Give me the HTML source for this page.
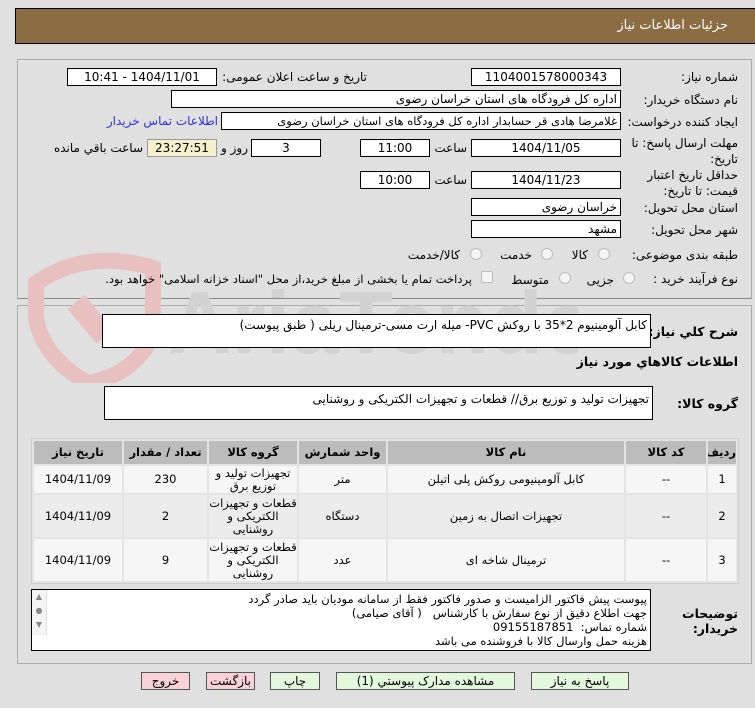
<!DOCTYPE html>
<html><head><meta charset="utf-8"><style>
*{box-sizing:border-box;margin:0;padding:0}
body{width:755px;height:708px;background:#e0e0e0;font-family:"DejaVu Sans","Liberation Sans",sans-serif;font-size:11px;color:#000;position:relative;overflow:hidden}
.a{position:absolute;white-space:nowrap}
.r{direction:rtl;text-align:right}
.box{position:absolute;background:#fff;border:1px solid #000;height:18px;line-height:16px;padding:0 3px;direction:rtl;white-space:nowrap;overflow:hidden;font-size:12px}
.c{text-align:center}
.lbl{position:absolute;direction:rtl;text-align:right;white-space:nowrap;font-size:12px}
.rad{position:absolute;width:12px;height:12px;border-radius:50%;border:1px solid #bbb;background:#f4f4f4}
.btn{position:absolute;top:672px;height:18px;border:1px solid #555;text-align:center;line-height:16px;font-size:12px}
.g{background:#e4f8de}.p{background:#f8d2d4}
table{position:absolute;left:31px;top:438px;width:708px;border-collapse:separate;border-spacing:2px;background:#e4e4e4;border:1px solid #ccc;direction:rtl;table-layout:fixed}
td,th{text-align:center;font-size:11.5px;line-height:13px;padding:0;overflow:hidden}
th{background:#bcbcbc;height:23px;font-weight:bold}
tr.o td{background:#f6f6f6}tr.e td{background:#ececec}
</style></head><body>
<div class="a" style="left:15px;top:8px;width:740px;height:36px;background:#8b6c43;border:1px solid #000;border-right:none"></div>
<div class="a r" style="right:27px;top:18px;color:#fff;font-size:13px">جزئیات اطلاعات نیاز</div>

<div class="a" style="left:17px;top:59px;width:735px;height:240px;border:1px solid #aaa;border-bottom-color:#888"></div>
<div class="a" style="left:17px;top:305px;width:735px;height:359px;border:1px solid #aaa"></div>

<svg class="a" style="left:18px;top:248px" width="560" height="135">
<path d="M18 35 Q70 0 135 20 L135 85 Q120 125 70 135 Q25 110 18 70 Z" fill="none" stroke="#e8c0c0" stroke-width="16"/>
<rect x="60" y="50" width="22" height="45" fill="#e8c0c0" transform="rotate(-40 70 70)"/>
<text x="150" y="105" font-family="Liberation Sans" font-weight="bold" font-size="88" fill="#d2d2d2">AriaTender.net</text>
</svg>

<div class="lbl" style="right:17px;top:70px">شماره نیاز:</div>
<div class="box c" style="left:471px;top:68px;width:150px">1104001578000343</div>
<div class="lbl" style="right:388px;top:70px">تاریخ و ساعت اعلان عمومی:</div>
<div class="box c" style="left:67px;top:68px;width:150px">1404/11/01 - 10:41</div>

<div class="lbl" style="right:17px;top:93px">نام دستگاه خریدار:</div>
<div class="box" style="left:171px;top:90px;width:450px">اداره کل فرودگاه های استان خراسان رضوی</div>

<div class="lbl" style="right:17px;top:115px">ایجاد کننده درخواست:</div>
<div class="box" style="left:221px;top:112px;width:400px;font-size:11.5px">غلامرضا هادی قر حسابدار اداره کل فرودگاه های استان خراسان رضوی</div>
<div class="lbl" style="right:537px;top:114px;color:#3030d0">اطلاعات تماس خریدار</div>

<div class="lbl" style="right:17px;top:135px;line-height:16px">مهلت ارسال پاسخ: تا<br>تاریخ:</div>
<div class="box c" style="left:471px;top:139px;width:150px">1404/11/05</div>
<div class="lbl" style="right:288px;top:141px">ساعت</div>
<div class="box c" style="left:360px;top:139px;width:70px">11:00</div>
<div class="box c" style="left:251px;top:139px;width:70px">3</div>
<div class="lbl" style="right:507px;top:141px">روز و</div>
<div class="box c" style="left:147px;top:139px;width:70px;background:#f5f0cc;border-color:#999">23:27:51</div>
<div class="lbl" style="right:612px;top:141px">ساعت باقي مانده</div>

<div class="lbl" style="right:17px;top:167px;line-height:16px">حداقل تاریخ اعتبار<br>قیمت: تا تاریخ:</div>
<div class="box c" style="left:471px;top:171px;width:150px">1404/11/23</div>
<div class="lbl" style="right:288px;top:173px">ساعت</div>
<div class="box c" style="left:360px;top:171px;width:70px">10:00</div>

<div class="lbl" style="right:17px;top:201px">استان محل تحویل:</div>
<div class="box" style="left:471px;top:198px;width:150px">خراسان رضوی</div>
<div class="lbl" style="right:17px;top:223px">شهر محل تحویل:</div>
<div class="box" style="left:471px;top:220px;width:150px">مشهد</div>

<div class="lbl" style="right:17px;top:248px">طبقه بندی موضوعی:</div>
<div class="rad" style="left:598px;top:248px"></div><div class="lbl" style="right:167px;top:248px">کالا</div>
<div class="rad" style="left:541px;top:248px"></div><div class="lbl" style="right:223px;top:248px">خدمت</div>
<div class="rad" style="left:470px;top:248px"></div><div class="lbl" style="right:295px;top:248px">کالا/خدمت</div>

<div class="lbl" style="right:17px;top:272px">نوع فرآیند خرید :</div>
<div class="rad" style="left:623px;top:272px"></div><div class="lbl" style="right:141px;top:273px">جزیی</div>
<div class="rad" style="left:559px;top:272px"></div><div class="lbl" style="right:206px;top:273px">متوسط</div>
<div class="a" style="left:481px;top:271px;width:12px;height:12px;border:1px solid #bbb;background:#f4f4f4;border-radius:2px"></div>
<div class="lbl" style="right:283px;top:272px;font-size:11.5px">پرداخت تمام یا بخشی از مبلغ خرید،از محل "اسناد خزانه اسلامی" خواهد بود.</div>

<div class="lbl" style="right:17px;top:324px;font-weight:bold;font-size:12.5px">شرح کلي نیاز:</div>
<div class="box" style="left:102px;top:314px;width:549px;height:34px;padding-top:2px">کابل آلومینیوم 2*35 با روکش PVC- میله ارت مسی-ترمینال ریلی ( طبق پیوست)</div>
<div class="lbl" style="right:17px;top:354px;font-weight:bold;font-size:12.5px">اطلاعات کالاهاي مورد نیاز</div>
<div class="lbl" style="right:17px;top:396px;font-weight:bold;font-size:12.5px">گروه کالا:</div>
<div class="box" style="left:104px;top:386px;width:549px;height:34px;padding-top:4px">تجهیزات تولید و توزیع برق// قطعات و تجهیزات الکتریکی و روشنایی</div>

<table>
<colgroup><col style="width:28px"><col style="width:80px"><col style="width:236px"><col style="width:87px"><col style="width:88px"><col style="width:83px"><col></colgroup>
<tr><th>ردیف</th><th>کد کالا</th><th>نام کالا</th><th>واحد شمارش</th><th>گروه کالا</th><th>تعداد / مقدار</th><th>تاریخ نیاز</th></tr>
<tr class="o" style="height:27px"><td>1</td><td>--</td><td>کابل آلومینیومی روکش پلی اتیلن</td><td>متر</td><td>تجهیزات تولید و<br>توزیع برق</td><td>230</td><td>1404/11/09</td></tr>
<tr class="e" style="height:42px"><td>2</td><td>--</td><td>تجهیزات اتصال به زمین</td><td>دستگاه</td><td>قطعات و تجهیزات<br>الکتریکی و<br>روشنایی</td><td>2</td><td>1404/11/09</td></tr>
<tr class="o" style="height:42px"><td>3</td><td>--</td><td>ترمینال شاخه ای</td><td>عدد</td><td>قطعات و تجهیزات<br>الکتریکی و<br>روشنایی</td><td>9</td><td>1404/11/09</td></tr>
</table>

<div class="lbl" style="right:17px;top:606px;font-weight:bold;line-height:15px;font-size:12.5px">توضیحات<br>خریدار:</div>
<div class="box" style="left:31px;top:589px;width:620px;height:62px;line-height:14px;padding-top:2px;white-space:normal;font-size:11.5px">پیوست پیش فاکتور الزامیست و صدور فاکتور فقط از سامانه مودیان باید صادر گردد<br>جهت اطلاع دقیق از نوع سفارش با کارشناس &nbsp; ( آقای صیامی)<br>شماره تماس: &nbsp;09155187851<br>هزینه حمل وارسال کالا با فروشنده می باشد</div>
<div class="a" style="left:32px;top:590px;width:15px;height:45px;background:#f4f4f4;border-right:1px solid #ddd;font-size:8px;color:#888;text-align:center;line-height:14px">▲<br>●<br>▼</div>

<div class="btn g" style="left:531px;width:98px">پاسخ به نیاز</div>
<div class="btn g" style="left:336px;width:179px">مشاهده مدارک پیوستي (1)</div>
<div class="btn g" style="left:270px;width:50px">چاپ</div>
<div class="btn p" style="left:206px;width:49px">بازگشت</div>
<div class="btn p" style="left:141px;width:49px">خروج</div>
</body></html>
